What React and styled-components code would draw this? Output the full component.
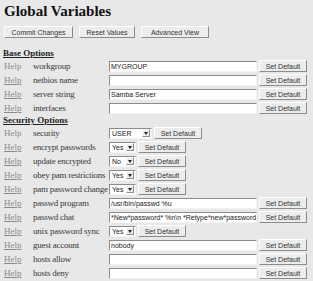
import React from 'react';
import styled, { createGlobalStyle } from 'styled-components';

const Global = createGlobalStyle`
    html, body {
        margin: 0;
        padding: 0;
        background: #e8e8e8;
    }
    body {
        font-family: "Liberation Serif", "Times New Roman", serif;
        color: #333;
    }
`;

const serif = `"Liberation Serif", "Times New Roman", serif`;

const Page = styled.div`
    width: 313px;
    height: 281px;
    overflow: hidden;
    padding: 3px 0 0 4px;
    box-sizing: border-box;
`;

const Title = styled.div`
    margin: 0;
    font-family: ${serif};
    font-size: 15px;
    line-height: 16px;
    font-weight: 700;
    color: #111;
`;

const Toolbar = styled.div`
    display: flex;
    gap: 6px;
    margin-top: 7px;
`;

const Button = styled.div`
    box-sizing: border-box;
    height: 12px;
    width: ${(p) => p.$w}px;
    display: flex;
    align-items: center;
    justify-content: center;
    background: #ececec;
    border: 1px solid;
    border-color: #fff #8c8c8c #8c8c8c #fff;
    font-family: "Liberation Sans", Arial, sans-serif;
    font-size: 7px;
    color: #333;
    flex-shrink: 0;
`;

const Section = styled.div`
    margin: ${(p) => p.$top}px 0 1px -1px;
    font-family: ${serif};
    font-size: 9px;
    line-height: 10px;
    font-weight: 700;
    color: #222;
    text-decoration: underline;
`;

const Row = styled.div`
    display: grid;
    grid-template-columns: 29px 76px 1fr;
    align-items: center;
    height: 14px;
`;

const Help = styled.span`
    font-size: 9px;
    color: #8a8a8a;
    text-decoration: ${(p) => (p.$plain ? 'none' : 'underline')};
`;

const Label = styled.span`
    font-size: 9px;
    letter-spacing: -0.25px;
    color: #3a3a3a;
    white-space: nowrap;
`;

const Value = styled.div`
    display: flex;
    align-items: center;
    gap: 2px;
`;

const TextBox = styled.div`
    box-sizing: border-box;
    width: 148px;
    height: 11px;
    background: #fff;
    border: 1px solid;
    border-color: #8c8c8c #f4f4f4 #f4f4f4 #8c8c8c;
    font-family: "Liberation Sans", Arial, sans-serif;
    font-size: 7px;
    line-height: 9px;
    padding-left: 1px;
    color: #222;
    white-space: nowrap;
    overflow: hidden;
`;

const Select = styled.div`
    box-sizing: border-box;
    width: ${(p) => p.$w}px;
    height: 11px;
    background: #fff;
    border: 1px solid;
    border-color: #8c8c8c #f4f4f4 #f4f4f4 #8c8c8c;
    display: flex;
    align-items: center;
    justify-content: space-between;
    font-family: "Liberation Sans", Arial, sans-serif;
    font-size: 7px;
    color: #222;
    padding-left: 2px;
`;

const Arrow = styled.span`
    box-sizing: border-box;
    width: 8px;
    height: 8px;
    margin-right: 1px;
    background: #ececec;
    border: 1px solid;
    border-color: #fff #8c8c8c #8c8c8c #fff;
    display: flex;
    align-items: center;
    justify-content: center;
    &::after {
        content: '';
        border-left: 2px solid transparent;
        border-right: 2px solid transparent;
        border-top: 3px solid #222;
    }
`;

const base = [
    { label: 'workgroup', text: 'MYGROUP', plain: true },
    { label: 'netbios name', text: '' },
    { label: 'server string', text: 'Samba Server' },
    { label: 'interfaces', text: '' },
];

const security = [
    { label: 'security', select: 'USER', w: 43, plain: true },
    { label: 'encrypt passwords', select: 'Yes', w: 27 },
    { label: 'update encrypted', select: 'No', w: 27 },
    { label: 'obey pam restrictions', select: 'Yes', w: 27 },
    { label: 'pam password change', select: 'Yes', w: 27 },
    { label: 'passwd program', text: '/usr/bin/passwd %u' },
    { label: 'passwd chat', text: '*New*password* %n\\n *Retype*new*password* %n\\n *passwd:*all*authentication*tokens*updated*successfully*' },
    { label: 'unix password sync', select: 'Yes', w: 27 },
    { label: 'guest account', text: 'nobody' },
    { label: 'hosts allow', text: '' },
    { label: 'hosts deny', text: '' },
];

function Param({ item }) {
    return (
        <Row>
            <Help $plain={item.plain}>Help</Help>
            <Label>{item.label}</Label>
            <Value>
                {item.select ? (
                    <Select $w={item.w}>
                        {item.select}
                        <Arrow />
                    </Select>
                ) : (
                    <TextBox>{item.text}</TextBox>
                )}
                <Button $w={48}>Set Default</Button>
            </Value>
        </Row>
    );
}

export default function App() {
    return (
        <Page>
            <Global />
            <Title>Global Variables</Title>
            <Toolbar>
                <Button $w={69}>Commit Changes</Button>
                <Button $w={56}>Reset Values</Button>
                <Button $w={68}>Advanced View</Button>
            </Toolbar>
            <Section $top={10}>Base Options</Section>
            {base.map((item) => <Param key={item.label} item={item} />)}
            <Section $top={0}>Security Options</Section>
            {security.map((item) => <Param key={item.label} item={item} />)}
        </Page>
    );
}
